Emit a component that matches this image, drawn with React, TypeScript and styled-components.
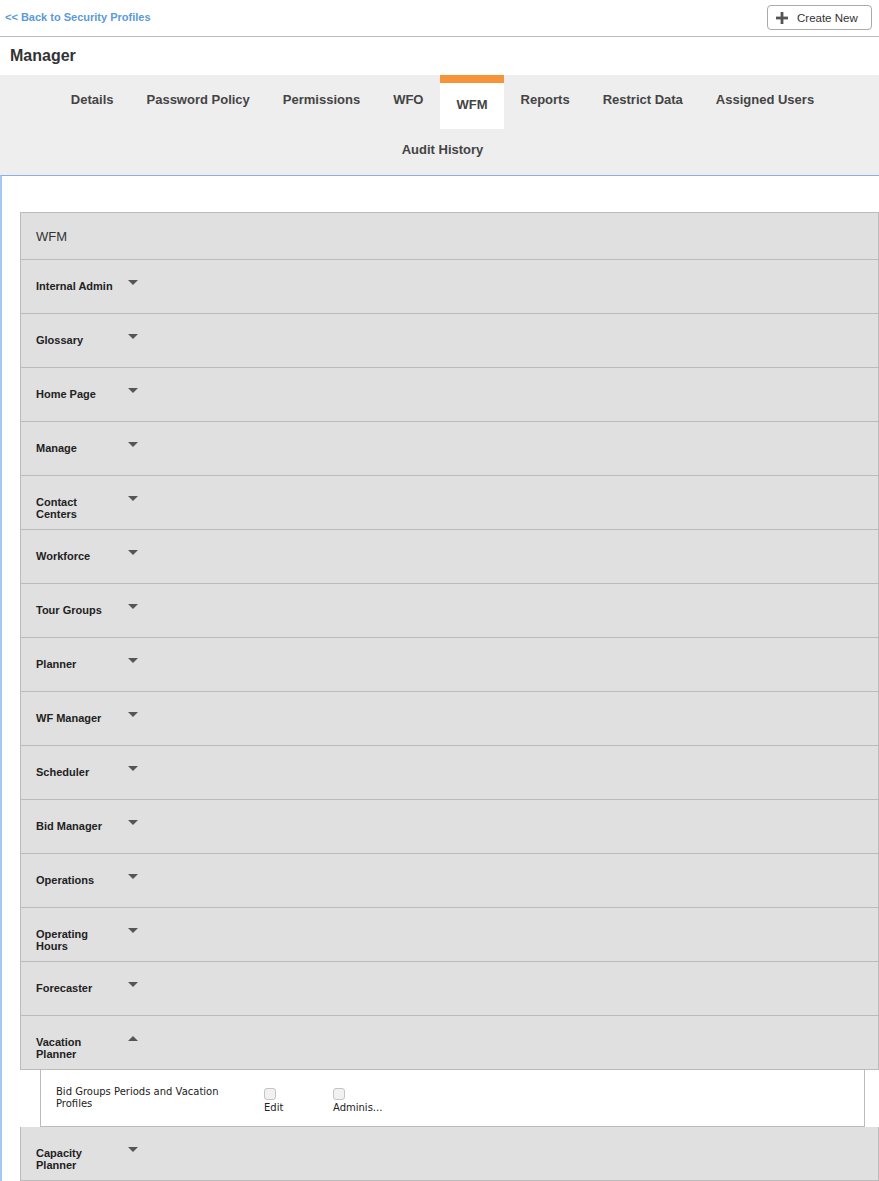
import React from "react";
import styled, { createGlobalStyle } from "styled-components";

const Global = createGlobalStyle`
  html, body { margin: 0; padding: 0; background: #fff; }
  body { font-family: "Liberation Sans", Arial, sans-serif; color: #333; }
  * { box-sizing: border-box; }
`;

const Page = styled.div`
  width: 879px;
  min-height: 1181px;
  display: flex;
  flex-direction: column;
`;

const TopBar = styled.div`
  height: 37px;
  border-bottom: 1px solid #bdbdbd;
  display: flex;
  align-items: flex-start;
  justify-content: space-between;
  padding: 5px 7px 0 5px;
`;

const BackLink = styled.a`
  font-size: 11px;
  font-weight: bold;
  color: #5b9bd8;
  text-decoration: none;
  line-height: 25px;
  cursor: pointer;
`;

const CreateButton = styled.button`
  height: 25px;
  width: 105px;
  border: 1px solid #aaa;
  border-radius: 4px;
  background: #fff;
  display: flex;
  align-items: center;
  gap: 9px;
  padding: 0 0 0 8px;
  font-family: "Liberation Sans", Arial, sans-serif;
  font-size: 11.5px;
  color: #333;
  cursor: pointer;
`;

const Title = styled.h1`
  margin: 0;
  height: 38px;
  display: flex;
  align-items: center;
  padding-left: 10px;
  font-size: 16px;
  font-weight: bold;
  color: #333;
`;

const TabBar = styled.div`
  background: #eeeeee;
  height: 100px;
  display: flex;
  flex-wrap: wrap;
  justify-content: center;
  align-content: flex-start;
  padding-left: 6px;
`;

const Tab = styled.div<{ $active?: boolean }>`
  height: ${(p) => (p.$active ? "54px" : "50px")};
  margin-bottom: ${(p) => (p.$active ? "-4px" : "0")};
  padding: ${(p) => (p.$active ? "0 16.5px" : "0 16.5px 2px")};
  display: flex;
  align-items: ${(p) => (p.$active ? "flex-start" : "center")};
  font-size: 13px;
  font-weight: bold;
  color: #444;
  background: ${(p) => (p.$active ? "#fff" : "transparent")};
  border-top: ${(p) => (p.$active ? "8px solid #f7943a" : "none")};
  line-height: ${(p) => (p.$active ? "44px" : "normal")};
  position: relative;
  z-index: ${(p) => (p.$active ? 1 : 0)};
  cursor: pointer;
`;

const Content = styled.div`
  border-top: 1px solid #8daee3;
  border-left: 2px solid #a5c7f5;
  padding: 36px 0 0 18px;
  flex: 1;
`;

const Panel = styled.div`
  display: flex;
  flex-direction: column;
`;

const PanelHeader = styled.div`
  height: 48px;
  background: #e0e0e0;
  border: 1px solid #bbb;
  display: flex;
  align-items: center;
  padding-left: 15px;
  font-size: 13px;
  color: #333;
`;

const Row = styled.div`
  height: 54px;
  background: #e0e0e0;
  border: 1px solid #bbb;
  border-top: none;
  display: flex;
  align-items: flex-start;
  padding: 20px 0 0 15px;
  cursor: pointer;
`;

const RowLabel = styled.div`
  width: 80px;
  font-size: 11px;
  font-weight: bold;
  line-height: 12px;
  color: #222;
`;

const Caret = styled.span<{ $up?: boolean }>`
  width: 0;
  height: 0;
  margin-left: 12px;
  border-left: 5px solid transparent;
  border-right: 5px solid transparent;
  ${(p) =>
    p.$up
      ? "border-bottom: 5px solid #555;"
      : "border-top: 5px solid #555;"}
`;

const Expanded = styled.div`
  margin: 0 14px 0 20px;
  height: 57px;
  background: #fff;
  border: 1px solid #bbb;
  border-top: none;
  display: flex;
  align-items: flex-start;
  padding: 16px 0 0 15px;
  font-family: "DejaVu Sans", Verdana, sans-serif;
  font-size: 10px;
  line-height: 12px;
  color: #222;
`;

const PermName = styled.div`
  width: 185px;
  margin-right: 23px;
`;

const PermOption = styled.label`
  width: 69px;
  margin-top: 2px;
  display: flex;
  flex-direction: column;
  align-items: flex-start;
  gap: 2px;
  cursor: pointer;
`;

const Check = styled.span`
  width: 12px;
  height: 12px;
  border: 1px solid #c4c4c4;
  border-radius: 3px;
  background: #f1f1f1;
`;

const PlusIcon = () => (
  <svg width="12" height="12" viewBox="0 0 12 12">
    <rect x="4.6" y="0" width="2.8" height="12" fill="#555" />
    <rect x="0" y="4.6" width="12" height="2.8" fill="#555" />
  </svg>
);

const tabs = [
  "Details",
  "Password Policy",
  "Permissions",
  "WFO",
  "WFM",
  "Reports",
  "Restrict Data",
  "Assigned Users",
  "Audit History",
];

const sections = [
  "Internal Admin",
  "Glossary",
  "Home Page",
  "Manage",
  "Contact Centers",
  "Workforce",
  "Tour Groups",
  "Planner",
  "WF Manager",
  "Scheduler",
  "Bid Manager",
  "Operations",
  "Operating Hours",
  "Forecaster",
  "Vacation Planner",
  "Capacity Planner",
];

export default function App() {
  return (
    <Page>
      <Global />
      <TopBar>
        <BackLink>&lt;&lt; Back to Security Profiles</BackLink>
        <CreateButton>
          <PlusIcon />
          <span>Create New</span>
        </CreateButton>
      </TopBar>
      <Title>Manager</Title>
      <TabBar>
        {tabs.map((t) => (
          <Tab key={t} $active={t === "WFM"}>
            {t}
          </Tab>
        ))}
      </TabBar>
      <Content>
        <Panel>
          <PanelHeader>WFM</PanelHeader>
          {sections.map((s) => (
            <React.Fragment key={s}>
              <Row>
                <RowLabel>{s}</RowLabel>
                <Caret $up={s === "Vacation Planner"} />
              </Row>
              {s === "Vacation Planner" && (
                <Expanded>
                  <PermName>Bid Groups Periods and Vacation Profiles</PermName>
                  <PermOption>
                    <Check />
                    <span>Edit</span>
                  </PermOption>
                  <PermOption>
                    <Check />
                    <span>Adminis...</span>
                  </PermOption>
                </Expanded>
              )}
            </React.Fragment>
          ))}
        </Panel>
      </Content>
    </Page>
  );
}
